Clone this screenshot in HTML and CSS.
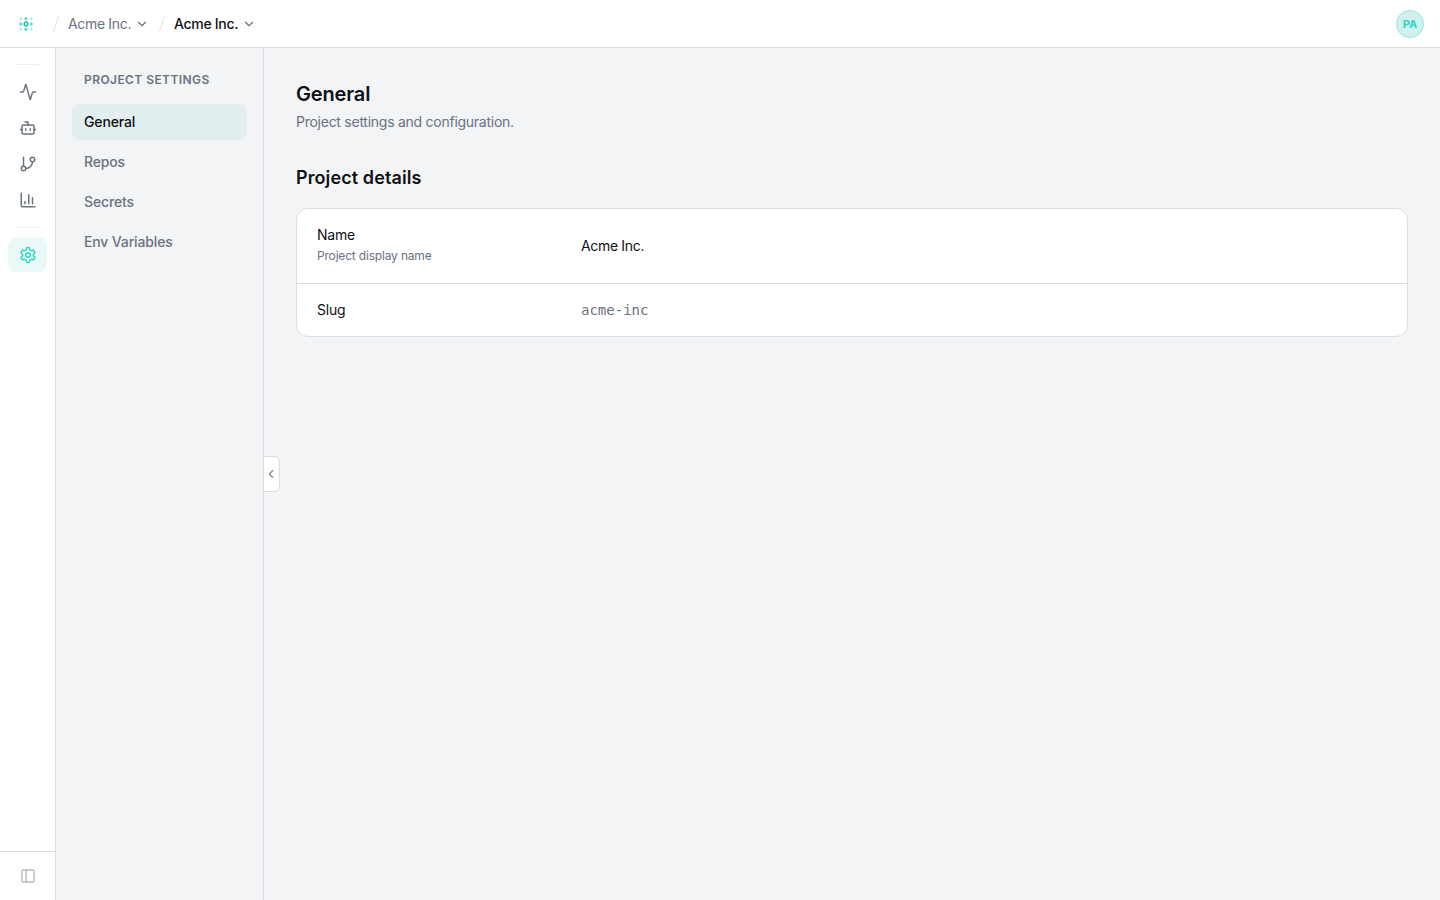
FILE: index.html
```html
<!DOCTYPE html>
<html lang="en">
<head>
    <meta charset="UTF-8">
    <title>Project settings</title>
    <link rel="stylesheet" href="styles.css">
</head>
<body>
    <header class="topbar">
        <svg class="logo" width="16" height="16" viewBox="0 0 16 16">
            <path d="M2.7 2.7h10.6v10.6H2.7z" fill="none" stroke="#2dd4bf" stroke-width="0.6" opacity="0.25"/>
            <circle cx="8" cy="8" r="1.9" fill="none" stroke="#14c9b0" stroke-width="1.5"/>
            <g fill="#2dd4bf" opacity="0.75">
                <circle cx="8" cy="2.7" r="1.6"/>
                <circle cx="8" cy="13.3" r="1.6"/>
                <circle cx="2.7" cy="8" r="1.6"/>
                <circle cx="13.3" cy="8" r="1.6"/>
            </g>
            <g fill="#2dd4bf" opacity="0.35">
                <circle cx="2.7" cy="2.7" r="1.3"/>
                <circle cx="13.3" cy="2.7" r="1.3"/>
                <circle cx="2.7" cy="13.3" r="1.3"/>
                <circle cx="13.3" cy="13.3" r="1.3"/>
            </g>
        </svg>
        <nav class="crumbs">
            <svg class="slash" width="8" height="18" viewBox="0 0 8 18"><path d="M6.5 1.5l-5 15"/></svg>
            <a class="crumb crumb-org">Acme Inc.</a>
            <svg class="icon chevron" width="14" height="14" viewBox="0 0 24 24"><path d="m6 9 6 6 6-6"/></svg>
            <svg class="slash slash-second" width="8" height="18" viewBox="0 0 8 18"><path d="M6.5 1.5l-5 15"/></svg>
            <a class="crumb crumb-current">Acme Inc.</a>
            <svg class="icon chevron" width="14" height="14" viewBox="0 0 24 24"><path d="m6 9 6 6 6-6"/></svg>
        </nav>
        <div class="avatar">PA</div>
    </header>

    <div class="layout">
        <aside class="rail">
            <div class="rail-nav">
                <div class="rail-line"></div>
                <a class="rail-item">
                    <svg class="icon" width="18" height="18" viewBox="0 0 24 24"><path d="M22 12h-2.48a2 2 0 0 0-1.93 1.46l-2.35 8.36a.25.25 0 0 1-.48 0L9.24 2.18a.25.25 0 0 0-.48 0l-2.35 8.36A2 2 0 0 1 4.49 12H2"/></svg>
                </a>
                <a class="rail-item">
                    <svg class="icon" width="18" height="18" viewBox="0 0 24 24"><path d="M12 8V4H8"/><rect width="16" height="12" x="4" y="8" rx="2"/><path d="M2 14h2M20 14h2M15 13v2M9 13v2"/></svg>
                </a>
                <a class="rail-item">
                    <svg class="icon" width="18" height="18" viewBox="0 0 24 24"><path d="M6 3v12"/><circle cx="18" cy="6" r="3"/><circle cx="6" cy="18" r="3"/><path d="M18 9a9 9 0 0 1-9 9"/></svg>
                </a>
                <a class="rail-item">
                    <svg class="icon" width="18" height="18" viewBox="0 0 24 24"><path d="M3 3v16a2 2 0 0 0 2 2h16M18 17V9M13 17V5M8 17v-3"/></svg>
                </a>
                <div class="rail-line rail-line-second"></div>
                <a class="rail-item active">
                    <svg class="icon" width="18" height="18" viewBox="0 0 24 24"><path d="M9.671 4.136a2.34 2.34 0 0 1 4.659 0 2.34 2.34 0 0 0 3.319 1.915 2.34 2.34 0 0 1 2.33 4.033 2.34 2.34 0 0 0 0 3.831 2.34 2.34 0 0 1-2.33 4.033 2.34 2.34 0 0 0-3.319 1.915 2.34 2.34 0 0 1-4.659 0 2.34 2.34 0 0 0-3.32-1.915 2.34 2.34 0 0 1-2.33-4.033 2.34 2.34 0 0 0 0-3.831A2.34 2.34 0 0 1 6.35 6.051a2.34 2.34 0 0 0 3.319-1.915"/><circle cx="12" cy="12" r="3"/></svg>
                </a>
            </div>
            <div class="rail-footer">
                <svg class="icon" width="16" height="16" viewBox="0 0 24 24"><rect width="18" height="18" x="3" y="3" rx="2"/><path d="M9 3v18"/></svg>
            </div>
        </aside>

        <aside class="sidebar">
            <h2 class="sidebar-title">Project Settings</h2>
            <nav class="menu">
                <a class="menu-item selected">General</a>
                <a class="menu-item">Repos</a>
                <a class="menu-item">Secrets</a>
                <a class="menu-item">Env Variables</a>
            </nav>
            <button class="collapse">
                <svg class="icon" width="14" height="14" viewBox="0 0 24 24"><path d="m15 18-6-6 6-6"/></svg>
            </button>
        </aside>

        <main class="content">
            <h1>General</h1>
            <p class="subtitle">Project settings and configuration.</p>
            <h2 class="section-title">Project details</h2>
            <div class="card">
                <div class="row row-name">
                    <div class="label">
                        <div>Name</div>
                        <div class="hint">Project display name</div>
                    </div>
                    <div class="value">Acme Inc.</div>
                </div>
                <div class="row">
                    <div class="label">Slug</div>
                    <div class="value slug">acme-inc</div>
                </div>
            </div>
        </main>
    </div>
</body>
</html>
```
FILE: styles.css
```css
* {
    box-sizing: border-box;
}
body {
    margin: 0;
    height: 100vh;
    display: flex;
    flex-direction: column;
    font-family: Inter, "Liberation Sans", sans-serif;
    font-size: 14px;
    line-height: 20px;
    color: #0f1115;
    background-color: #f2f4f6;
    overflow: hidden;
}
h1, h2, p {
    margin: 0;
}
.icon {
    display: block;
    flex: none;
    fill: none;
    stroke: currentColor;
    stroke-width: 2;
    stroke-linecap: round;
    stroke-linejoin: round;
}
.topbar {
    height: 48px;
    flex: none;
    display: flex;
    align-items: center;
    padding: 0 16px 0 18px;
    background-color: #fff;
    border-bottom: 1px solid #dadee2;
}
.crumbs {
    display: flex;
    align-items: center;
    margin-left: 18px;
}
.slash {
    fill: none;
    stroke: #e0e3e7;
    stroke-width: 1;
    margin-right: 8px;
}
.slash-second {
    margin-left: 9px;
}
.crumb {
    white-space: nowrap;
}
.crumb-org {
    color: #6b7280;
    width: 63px;
    letter-spacing: -0.33px;
}
.crumb-current {
    color: #0f1115;
    font-weight: 500;
    width: 64px;
    letter-spacing: -0.3px;
}
.chevron {
    color: #6b7280;
    margin-left: 4px;
}
.avatar {
    width: 28px;
    height: 28px;
    margin-left: auto;
    border: 1px solid #98e4da;
    border-radius: 50%;
    background-color: #d0f1ed;
    color: #2dd4bf;
    font-size: 11px;
    font-weight: 700;
    line-height: 26px;
    text-align: center;
}
.layout {
    flex: 1;
    display: flex;
    min-height: 0;
}
.rail {
    width: 56px;
    flex: none;
    display: flex;
    flex-direction: column;
    justify-content: space-between;
    background-color: #fff;
    border-right: 1px solid #dadee2;
}
.rail-nav {
    display: flex;
    flex-direction: column;
    gap: 2px;
    padding: 16px 8px;
}
.rail-line {
    height: 1px;
    margin: 0 8px 8px;
    background-color: #eceef0;
}
.rail-line-second {
    margin-top: 8px;
}
.rail-item {
    height: 34px;
    display: flex;
    align-items: center;
    justify-content: center;
    border-radius: 8px;
    color: #6b7280;
}
.rail-item.active {
    background-color: #eaf9f8;
    color: #2dd4bf;
}
.rail-footer {
    height: 49px;
    display: flex;
    align-items: center;
    justify-content: center;
    border-top: 1px solid #dadee2;
    color: #b5b9c0;
}
.sidebar {
    position: relative;
    width: 208px;
    flex: none;
    padding: 24px 16px;
    border-right: 1px solid #dadee2;
}
.sidebar-title {
    padding-left: 12px;
    font-size: 12px;
    line-height: 16px;
    font-weight: 600;
    letter-spacing: 0.42px;
    text-transform: uppercase;
    white-space: nowrap;
    color: #6b7280;
}
.menu {
    display: flex;
    flex-direction: column;
    gap: 4px;
    margin-top: 16px;
}
.menu-item {
    padding: 8px 12px;
    border-radius: 8px;
    font-weight: 500;
    letter-spacing: -0.15px;
    color: #6b7280;
}
.menu-item.selected {
    background-color: #e2eeef;
    color: #0f1115;
}
.collapse {
    position: absolute;
    top: 408px;
    left: 207px;
    width: 17px;
    height: 36px;
    padding: 0 1px 0 0;
    display: flex;
    align-items: center;
    justify-content: center;
    border: 1px solid #dadee2;
    border-radius: 0 6px 6px 0;
    background-color: #fff;
    color: #7f8590;
}
.content {
    flex: 1;
    padding: 32px;
}
h1 {
    font-size: 20px;
    line-height: 28px;
    font-weight: 600;
    letter-spacing: -0.15px;
}
.subtitle {
    margin-top: 4px;
    letter-spacing: -0.26px;
    color: #6b7280;
}
.section-title {
    margin-top: 32px;
    font-size: 18px;
    line-height: 28px;
    font-weight: 600;
    letter-spacing: 0.1px;
}
.card {
    margin-top: 16px;
    background-color: #fff;
    border: 1px solid #dadee2;
    border-radius: 12px;
}
.row {
    display: grid;
    grid-template-columns: 240px 1fr;
    gap: 24px;
    align-items: center;
    padding: 16px 20px;
}
.row + .row {
    border-top: 1px solid #dadee2;
}
.label {
    letter-spacing: -0.2px;
}
.row-name .label {
    padding-bottom: 2px;
}
.hint {
    margin-top: 2px;
    font-size: 12px;
    line-height: 18px;
    letter-spacing: -0.18px;
    color: #6b7280;
}
.value {
    letter-spacing: -0.33px;
}
.slug {
    font-family: "DejaVu Sans Mono", monospace;
    letter-spacing: 0;
    color: #6b7280;
}
```
